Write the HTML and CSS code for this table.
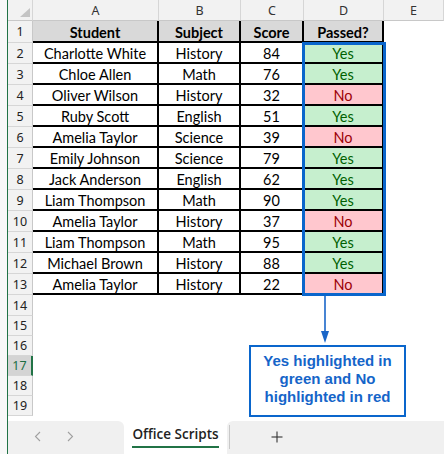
FILE: index.html
```html
<!DOCTYPE html>
<html>
<head>
<meta charset="utf-8">
<link rel="stylesheet" href="styles.css">
</head>
<body>
<div class="app">
  <div class="strip"></div>
  <div class="main">
    <div class="grid">
      <div class="ch corner"><svg width="25" height="21" viewBox="0 0 25 21"><polygon points="22,8 22,17 12,17" fill="#c4c4c4"/></svg></div>
      <div class="ch">A</div><div class="ch">B</div><div class="ch">C</div><div class="ch">D</div><div class="ch">E</div>

      <div class="rh">1</div><div class="c hd">Student</div><div class="c hd">Subject</div><div class="c hd">Score</div><div class="c hd">Passed?</div><div class="e"></div>
      <div class="rh">2</div><div class="c">Charlotte White</div><div class="c">History</div><div class="c">84</div><div class="c yes">Yes</div><div class="e"></div>
      <div class="rh">3</div><div class="c">Chloe Allen</div><div class="c">Math</div><div class="c">76</div><div class="c yes">Yes</div><div class="e"></div>
      <div class="rh">4</div><div class="c">Oliver Wilson</div><div class="c">History</div><div class="c">32</div><div class="c no">No</div><div class="e"></div>
      <div class="rh">5</div><div class="c">Ruby Scott</div><div class="c">English</div><div class="c">51</div><div class="c yes">Yes</div><div class="e"></div>
      <div class="rh">6</div><div class="c">Amelia Taylor</div><div class="c">Science</div><div class="c">39</div><div class="c no">No</div><div class="e"></div>
      <div class="rh">7</div><div class="c">Emily Johnson</div><div class="c">Science</div><div class="c">79</div><div class="c yes">Yes</div><div class="e"></div>
      <div class="rh">8</div><div class="c">Jack Anderson</div><div class="c">English</div><div class="c">62</div><div class="c yes">Yes</div><div class="e"></div>
      <div class="rh">9</div><div class="c">Liam Thompson</div><div class="c">Math</div><div class="c">90</div><div class="c yes">Yes</div><div class="e"></div>
      <div class="rh">10</div><div class="c">Amelia Taylor</div><div class="c">History</div><div class="c">37</div><div class="c no">No</div><div class="e"></div>
      <div class="rh">11</div><div class="c">Liam Thompson</div><div class="c">Math</div><div class="c">95</div><div class="c yes">Yes</div><div class="e"></div>
      <div class="rh">12</div><div class="c">Michael Brown</div><div class="c">History</div><div class="c">88</div><div class="c yes">Yes</div><div class="e"></div>
      <div class="rh">13</div><div class="c">Amelia Taylor</div><div class="c">History</div><div class="c">22</div><div class="c no">No</div><div class="e"></div>

      <div class="rh">14</div><div class="e span5"></div>
      <div class="rh">15</div><div class="e span5"></div>
      <div class="rh">16</div><div class="e span5"></div>
      <div class="rh active">17</div><div class="e span5"></div>
      <div class="rh">18</div><div class="e span5"></div>
      <div class="rh">19</div><div class="e span5"></div>
    </div>

    <div class="selection"></div>
    <svg class="arrow" width="14" height="49" viewBox="0 0 14 49">
      <line x1="7" y1="0" x2="7" y2="38" stroke="#1a66c8" stroke-width="1.6"/>
      <polygon points="3,35 11,35 7,47" fill="#1a66c8"/>
    </svg>
    <div class="callout">Yes highlighted in<br>green and No<br>highlighted in red</div>

    <div class="tabbar">
      <div class="tb-left">
        <svg class="nav" width="8" height="11" viewBox="0 0 8 11"><polyline points="6,1 1.5,5.5 6,10" fill="none" stroke="#a0a0a0" stroke-width="1.1"/></svg>
        <svg class="nav" width="8" height="11" viewBox="0 0 8 11"><polyline points="2,1 6.5,5.5 2,10" fill="none" stroke="#a0a0a0" stroke-width="1.1"/></svg>
      </div>
      <div class="tab"><span class="tab-label">Office Scripts</span></div>
      <div class="tb-right">
        <div class="sep"></div>
        <svg class="plus" width="12" height="12" viewBox="0 0 12 12"><line x1="6" y1="0.5" x2="6" y2="11.5" stroke="#333" stroke-width="1.1"/><line x1="0.5" y1="6" x2="11.5" y2="6" stroke="#333" stroke-width="1.1"/></svg>
      </div>
    </div>
  </div>
</div>
</body>
</html>
```

FILE: styles.css
```css
* { box-sizing: border-box; }
html, body { margin: 0; padding: 0; background: #fff; }
body { width: 444px; height: 454px; overflow: hidden; }

.app { display: flex; height: 454px; }
.strip { width: 8px; background: #f8f8f8; border-right: 1px solid #217346; flex: none; }
.main { width: 436px; position: relative; display: flex; flex-direction: column; }

.grid {
  display: grid;
  grid-template-columns: 25px 126px 82px 63px 80px 60px;
  grid-template-rows: 21px 22px repeat(12, 21px) 21px repeat(5, 20px);
}

.ch {
  background: #f2f2f2;
  border-right: 1px solid #d6d6d6;
  border-bottom: 1px solid #c8c8c8;
  display: flex; align-items: center; justify-content: center;
  font-family: "Noto Sans", sans-serif; font-size: 12.5px; color: #333;
}
.corner { display: block; }
.corner svg { display: block; }

.rh {
  background: #f2f2f2;
  border-right: 1px solid #c8c8c8;
  border-bottom: 1px solid #d6d6d6;
  display: flex; align-items: center; justify-content: center;
  font-family: "Noto Sans", sans-serif; font-size: 12.5px; color: #222;
}
.rh.active { background: #d4d4d4; border-right: 2px solid #217346; color: #1e6e44; }

.c {
  border-right: 2px solid #000;
  border-bottom: 2px solid #000;
  display: flex; align-items: center; justify-content: center;
  padding-top: 2px;
  font-family: "Lato", sans-serif; font-size: 14.5px; color: #000;
  white-space: nowrap;
}
.hd { background: #d9d9d9; font-weight: 700; }
.yes { background: #c6efce; color: #006100; }
.no { background: #ffc7ce; color: #9c0006; }
.e { background: #fff; }
.span5 { grid-column: span 5; }

.selection {
  position: absolute; left: 294px; top: 42px; width: 84px; height: 254px;
  border: 3px solid #0a66cc;
}
.arrow { position: absolute; left: 310px; top: 296px; }
.callout {
  position: absolute; left: 241px; top: 345px; width: 157px; height: 72px;
  border: 2px solid #0a66cc; background: #fff;
  padding-top: 5px; text-align: center;
  font-family: "Liberation Sans", Arial, sans-serif; font-weight: 700; font-size: 15px;
  line-height: 18px; color: #1565c9;
}

.tabbar { display: flex; height: 38px; margin-top: 0; }
.tb-left {
  width: 116px; margin-top: 5px; background: #f0f0f0;
  border-top-right-radius: 6px;
  display: flex; align-items: center; padding-left: 26px; gap: 24px;
  padding-bottom: 2px;
}
.nav { display: block; }
.tab {
  width: 103px; background: #fff;
  display: flex; justify-content: center; padding-top: 9px;
}
.tab-label {
  font-family: "Open Sans", sans-serif; font-weight: 600; font-size: 13.5px; color: #222;
  height: 23px; line-height: 19px;
  border-bottom: 2px solid #217346;
}
.tb-right {
  flex: 1; margin-top: 5px; background: #f0f0f0;
  border-top-left-radius: 6px;
  display: flex; align-items: center; padding-bottom: 2px;
}
.sep { width: 1px; height: 24px; background: #c8c8c8; margin-left: 2px; }
.plus { margin-left: 41px; display: block; }
```
